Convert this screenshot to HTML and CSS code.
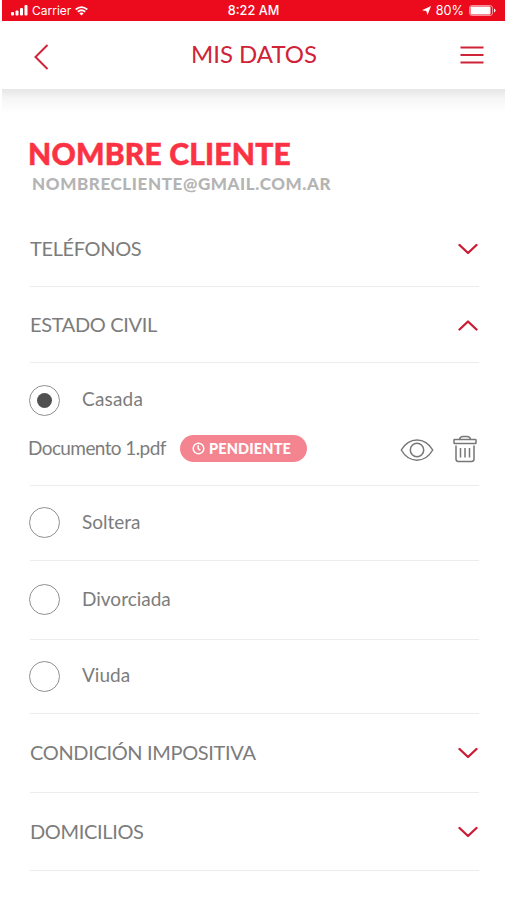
FILE: index.html
```html
<!DOCTYPE html>
<html lang="es">
<head>
<meta charset="utf-8">
<title>Mis datos</title>
<link rel="stylesheet" href="styles.css">
</head>
<body>
<div class="status">
  <div class="status-left">
    <svg width="17" height="11" viewBox="0 0 17 11" fill="#fff"><rect x="0" y="7" width="3" height="3.5" rx="1"/><rect x="4.5" y="5.5" width="3" height="5" rx="1"/><rect x="9" y="3" width="3" height="7.5" rx="1"/><rect x="13.5" y="0" width="3" height="10.5" rx="1"/></svg>
    <span class="carrier">Carrier</span>
    <svg width="13" height="10" viewBox="0 0 13 10" fill="none" stroke="#fff" stroke-width="1.8"><path d="M.7 3.5Q6.5-1.3 12.3 3.5M2.8 5.8Q6.5 2.8 10.2 5.8"/><path d="M4.3 7.2Q6.5 5.6 8.7 7.2L6.5 9.5Z" fill="#fff" stroke="none"/></svg>
  </div>
  <span class="time">8:22 AM</span>
  <div class="status-right">
    <svg width="9" height="9" viewBox="0 0 9 9" fill="#fff"><path d="M9 0L5.5 9L4.3 5L0 4.3Z"/></svg>
    <span class="percent">80%</span>
    <svg width="27" height="11" viewBox="0 0 27 11"><rect x=".5" y=".5" width="23" height="10" rx="2.5" fill="none" stroke="#fff" stroke-opacity=".55"/><rect x="1.5" y="1.5" width="20" height="8" rx="1" fill="#fff"/><path d="M25 3.5Q28 5.5 25 7.5Z" fill="#fff"/></svg>
  </div>
</div>
<header class="header">
  <svg class="back" width="15" height="26" viewBox="0 0 15 26"><path d="M13.5 1L1.5 13L13.5 25"/></svg>
  <h1 class="title">MIS DATOS</h1>
  <svg class="menu" width="26" height="20" viewBox="0 0 26 20"><path d="M1.5 2.5H24.5M1.5 10H24.5M1.5 17.5H24.5"/></svg>
</header>
<main class="content">
  <section class="profile">
    <h2 class="name">NOMBRE CLIENTE</h2>
    <p class="email">NOMBRECLIENTE@GMAIL.COM.AR</p>
  </section>
  <div class="row section"><span>TELÉFONOS</span><svg class="chevron" width="20" height="12" viewBox="0 0 20 12"><path d="M1.5 2L10 10L18.5 2"/></svg></div>
  <div class="row section"><span>ESTADO CIVIL</span><svg class="chevron" width="20" height="12" viewBox="0 0 20 12"><path d="M1.5 10.5L10 2.5L18.5 10.5"/></svg></div>
  <div class="selected">
    <div class="option"><i class="radio on"></i><span class="casada">Casada</span></div>
    <div class="document">
      <span class="filename">Documento 1.pdf</span>
      <span class="badge"><svg width="13" height="13" viewBox="0 0 13 13" fill="none" stroke="#fff" stroke-width="1.5"><circle cx="6.5" cy="6.5" r="5.3"/><path d="M6.2 3.2V6.7L8.3 8.4"/></svg><b>PENDIENTE</b></span>
      <svg class="eye" width="34" height="24" viewBox="0 0 34 24"><path d="M1.3 12C9-1.5 25-1.5 32.7 12C25 25.5 9 25.5 1.3 12Z"/><circle cx="17" cy="12" r="6.7"/></svg>
      <svg class="trash" width="24" height="28" viewBox="0 0 24 28"><path d="M6.5 4.5Q7 1.5 10 1.5H14Q17 1.5 17.5 4.5"/><rect x="1" y="4.5" width="22" height="4" rx=".6"/><path d="M3 10.5V24Q3 26.5 5.5 26.5H18.5Q21 26.5 21 24V10.5M7.5 13V22.5M12 13V22.5M16.5 13V22.5"/></svg>
    </div>
  </div>
  <div class="row option soltera"><i class="radio"></i><span>Soltera</span></div>
  <div class="row option divorciada"><i class="radio"></i><span>Divorciada</span></div>
  <div class="row option viuda"><i class="radio"></i><span>Viuda</span></div>
  <div class="row section tax"><span>CONDICIÓN IMPOSITIVA</span><svg class="chevron" width="20" height="12" viewBox="0 0 20 12"><path d="M1.5 2L10 10L18.5 2"/></svg></div>
  <div class="row section home"><span>DOMICILIOS</span><svg class="chevron" width="20" height="12" viewBox="0 0 20 12"><path d="M1.5 2L10 10L18.5 2"/></svg></div>
</main>
</body>
</html>
```
FILE: styles.css
```css
* { box-sizing: border-box; }
body { margin: 0; padding: 0 2px; width: 507px; height: 900px; overflow: hidden; background: #fff; color: #7c7c7c; font-family: Lato, "Liberation Sans", sans-serif; }
h1, h2, p { margin: 0; }
svg { display: block; flex: none; }
span, h1, h2, p { white-space: nowrap; }
.status { height: 21px; background: #ec0b1d; color: #fff; display: grid; grid-template-columns: 1fr auto 1fr; align-items: center; padding: 0 9px; font: 500 12.7px/20px Inter, sans-serif; }
.status-left, .status-right { display: flex; align-items: center; }
.status-left { gap: 4px; }
.status-right { justify-content: flex-end; gap: 5px; }
.carrier { font-weight: 400; font-size: 12px; }
.percent { font-weight: 400; }
.header { height: 68px; display: flex; align-items: center; justify-content: space-between; padding: 0 20px 0 32px; }
.back, .menu { fill: none; stroke: #cf2338; stroke-width: 2; }
.back { margin-top: 3px; }
.title { font-weight: 400; font-size: 24px; line-height: 30px; padding-bottom: 2px; color: #cf2338; }
.content { height: 811px; padding: 0 26px 0 28px; background: linear-gradient(#e6e6e6, #f6f6f6 10px, #fff 24px) no-repeat; background-size: 100% 24px; }
.profile { height: 122px; padding-top: 46px; }
.name { margin-left: -2px; font-size: 30px; line-height: 37px; font-weight: 900; letter-spacing: .2px; color: #fb3243; -webkit-text-stroke: .5px #fb3243; }
.email { margin-left: 2px; font-size: 17px; line-height: 24px; font-weight: 900; letter-spacing: .6px; color: #b4b4b4; }
.row { height: 76px; border-bottom: 1px solid #ececec; display: flex; align-items: center; }
.section { justify-content: space-between; font-size: 20px; letter-spacing: -.35px; }
.section span { padding-bottom: 2px; }
.chevron { margin-right: 1px; fill: none; stroke: #cc1a35; stroke-width: 2.3; stroke-linecap: round; stroke-linejoin: round; }
.selected { height: 123px; padding-top: 22px; border-bottom: 1px solid #ececec; }
.option { display: flex; align-items: center; gap: 22px; font-size: 19px; }
.option span { padding-bottom: 4px; }
.casada { letter-spacing: .2px; }
.radio { width: 31px; height: 31px; margin-left: -1px; flex: none; display: grid; place-items: center; border: 1.5px solid #909090; border-radius: 50%; }
.row .radio { margin-bottom: 1px; }
.on::before { content: ""; width: 15px; height: 15px; border-radius: 50%; background: #505050; }
.document { display: flex; align-items: center; height: 32px; margin-top: 16px; }
.filename { width: 152px; margin-left: -2px; padding-bottom: 2px; font-size: 19px; letter-spacing: -.6px; }
.badge { width: 127px; height: 27px; display: flex; align-items: center; padding-left: 12px; gap: 4px; border-radius: 14px; background: #f48590; color: #fff; font-size: 14.5px; letter-spacing: .15px; }
.badge b { font-weight: 900; }
.eye, .trash { fill: none; stroke: #777; stroke-width: 1.5; }
.eye { margin-left: auto; margin-right: 19px; margin-top: 4px; }
.trash { margin-right: 2px; margin-top: 1px; }
.soltera { height: 75px; }
.divorciada { height: 79px; }
.viuda { height: 74px; }
.tax { height: 79px; }
.home { height: 78px; }
```
